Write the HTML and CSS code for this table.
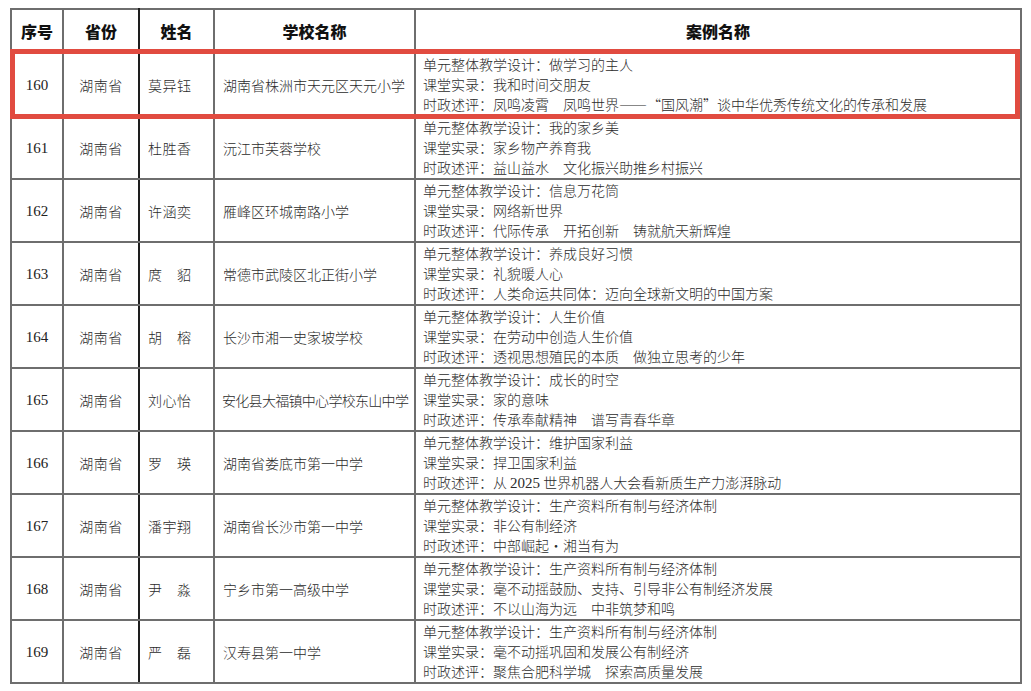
FILE: index.html
```html
<!DOCTYPE html>
<html lang="zh-CN">
<head>
<meta charset="utf-8">
<title>案例名单</title>
<link rel="stylesheet" href="styles.css">
</head>
<body>
<div class="sheet">
  <table class="list">
    <colgroup>
      <col class="c-no"><col class="c-prov"><col class="c-name"><col class="c-school"><col class="c-case">
    </colgroup>
    <thead>
      <tr><th>序号</th><th>省份</th><th>姓名</th><th>学校名称</th><th>案例名称</th></tr>
    </thead>
    <tbody>
      <tr>
        <td class="no">160</td><td class="prov">湖南省</td><td class="name">莫异钰</td><td class="school">湖南省株洲市天元区天元小学</td>
        <td class="case">单元整体教学设计：做学习的主人<br>课堂实录：我和时间交朋友<br>时政述评：凤鸣凌霄　凤鸣世界——“国风潮”谈中华优秀传统文化的传承和发展</td>
      </tr>
      <tr>
        <td class="no">161</td><td class="prov">湖南省</td><td class="name">杜胜香</td><td class="school">沅江市芙蓉学校</td>
        <td class="case">单元整体教学设计：我的家乡美<br>课堂实录：家乡物产养育我<br>时政述评：益山益水　文化振兴助推乡村振兴</td>
      </tr>
      <tr>
        <td class="no">162</td><td class="prov">湖南省</td><td class="name">许涵奕</td><td class="school">雁峰区环城南路小学</td>
        <td class="case">单元整体教学设计：信息万花筒<br>课堂实录：网络新世界<br>时政述评：代际传承　开拓创新　铸就航天新辉煌</td>
      </tr>
      <tr>
        <td class="no">163</td><td class="prov">湖南省</td><td class="name">庹　貂</td><td class="school">常德市武陵区北正街小学</td>
        <td class="case">单元整体教学设计：养成良好习惯<br>课堂实录：礼貌暖人心<br>时政述评：人类命运共同体：迈向全球新文明的中国方案</td>
      </tr>
      <tr>
        <td class="no">164</td><td class="prov">湖南省</td><td class="name">胡　榕</td><td class="school">长沙市湘一史家坡学校</td>
        <td class="case">单元整体教学设计：人生价值<br>课堂实录：在劳动中创造人生价值<br>时政述评：透视思想殖民的本质　做独立思考的少年</td>
      </tr>
      <tr>
        <td class="no">165</td><td class="prov">湖南省</td><td class="name">刘心怡</td><td class="school tight">安化县大福镇中心学校东山中学</td>
        <td class="case">单元整体教学设计：成长的时空<br>课堂实录：家的意味<br>时政述评：传承奉献精神　谱写青春华章</td>
      </tr>
      <tr>
        <td class="no">166</td><td class="prov">湖南省</td><td class="name">罗　瑛</td><td class="school">湖南省娄底市第一中学</td>
        <td class="case">单元整体教学设计：维护国家利益<br>课堂实录：捍卫国家利益<br>时政述评：从 <span class="num">2025</span> 世界机器人大会看新质生产力澎湃脉动</td>
      </tr>
      <tr>
        <td class="no">167</td><td class="prov">湖南省</td><td class="name">潘宇翔</td><td class="school">湖南省长沙市第一中学</td>
        <td class="case">单元整体教学设计：生产资料所有制与经济体制<br>课堂实录：非公有制经济<br>时政述评：中部崛起·湘当有为</td>
      </tr>
      <tr>
        <td class="no">168</td><td class="prov">湖南省</td><td class="name">尹　淼</td><td class="school">宁乡市第一高级中学</td>
        <td class="case">单元整体教学设计：生产资料所有制与经济体制<br>课堂实录：毫不动摇鼓励、支持、引导非公有制经济发展<br>时政述评：不以山海为远　中非筑梦和鸣</td>
      </tr>
      <tr>
        <td class="no">169</td><td class="prov">湖南省</td><td class="name">严　磊</td><td class="school">汉寿县第一中学</td>
        <td class="case">单元整体教学设计：生产资料所有制与经济体制<br>课堂实录：毫不动摇巩固和发展公有制经济<br>时政述评：聚焦合肥科学城　探索高质量发展</td>
      </tr>
    </tbody>
  </table>
  <div class="highlight"></div>
</div>
</body>
</html>
```

FILE: styles.css
```css
html, body {
  margin: 0;
  padding: 0;
  background: #ffffff;
}

body {
  font-family: "Noto Sans CJK SC", "Liberation Serif", serif;
  color: #2b2b2b;
}

.sheet {
  position: relative;
  width: 1010px;
  margin: 8px 0 0 10px;
}

.list {
  width: 1010px;
  table-layout: fixed;
  border-collapse: collapse;
  border: 2px solid #5a5a5a;
}

.c-no { width: 52px; }
.c-prov { width: 76px; }
.c-name { width: 75px; }
.c-school { width: 201px; }
.c-case { width: 606px; }

.list th,
.list td {
  border: 2px solid #6e6e6e;
  padding: 0;
  vertical-align: middle;
  white-space: nowrap;
  overflow: hidden;
}

.list th {
  height: 42px;
  font-size: 16px;
  font-weight: 900;
  color: #111;
  text-align: center;
}

.list td {
  height: 61px;
  font-size: 14px;
  line-height: 20px;
  font-weight: 300;
}

.list th:nth-child(2),
.list td:nth-child(2) {
  border-right-color: #1e1e1e;
}

.list td.no {
  text-align: center;
  font-family: "Liberation Serif", serif;
  font-size: 15px;
  font-weight: 400;
  color: #222;
}

.prov {
  text-align: center;
  letter-spacing: 0.5px;
}

.list td.name {
  padding-left: 8px;
  letter-spacing: 0.5px;
}

.list td.school {
  padding-left: 8px;
  letter-spacing: 0;
}

.list td.school.tight {
  padding-left: 7px;
  letter-spacing: -0.7px;
}

.list td.case {
  padding-left: 7px;
  line-height: 20px;
  vertical-align: top;
}

.num {
  font-family: "Liberation Serif", serif;
  font-size: 15px;
}

.highlight {
  position: absolute;
  left: 0;
  top: 41px;
  width: 1010px;
  height: 70px;
  box-sizing: border-box;
  border: 5px solid #e14b40;
  pointer-events: none;
}
```
